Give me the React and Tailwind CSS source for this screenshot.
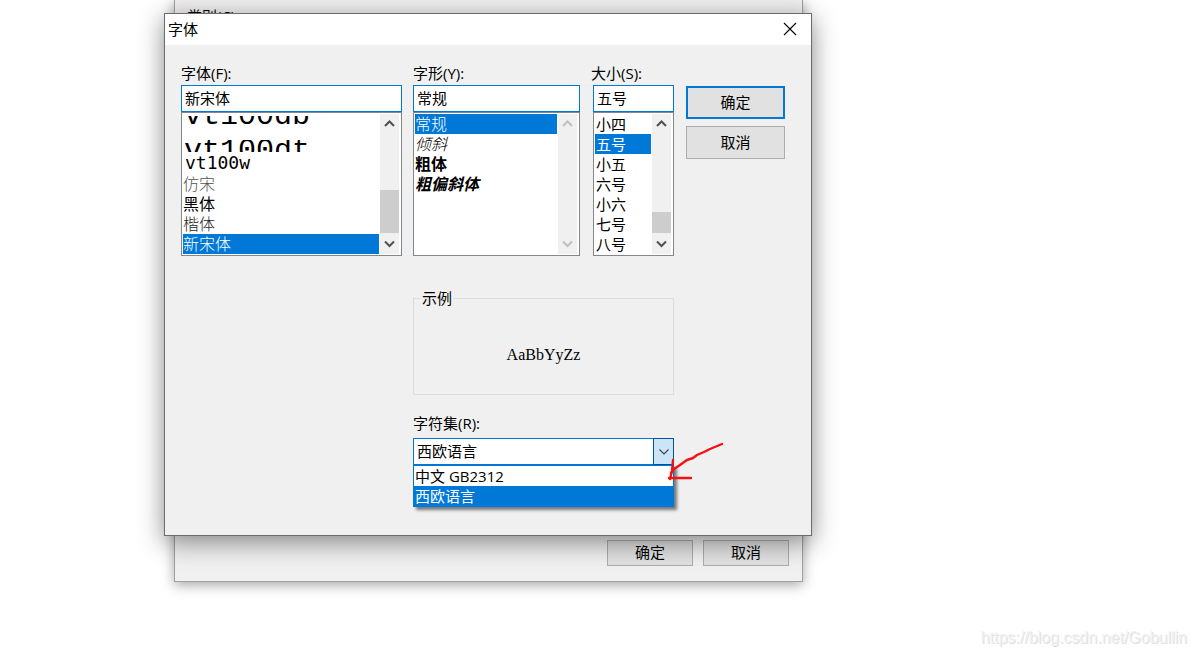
import { useState } from 'react';
import clsx from 'clsx';

const FONTS = [
  { id: 'vt100db', label: 'vt100db', kind: 'cutTop' },
  { id: 'vt100dt', label: 'vt100dt', kind: 'cutBottom' },
  { id: 'vt100w', label: 'vt100w', kind: 'wide' },
  { id: 'fangsong', label: '仿宋', className: 'font-light text-neutral-600' },
  { id: 'heiti', label: '黑体' },
  { id: 'kaiti', label: '楷体', className: 'font-light text-neutral-800' },
  { id: 'nsimsun', label: '新宋体', className: 'font-light' },
];

const STYLES = [
  { id: 'regular', label: '常规', className: 'font-light' },
  { id: 'italic', label: '倾斜', className: 'font-light italic' },
  { id: 'bold', label: '粗体', className: 'font-bold' },
  { id: 'boldItalic', label: '粗偏斜体', className: 'font-bold italic' },
];

const SIZES = ['小四', '五号', '小五', '六号', '小六', '七号', '八号'].map((s) => ({
  id: s,
  label: s,
}));

const CHARSETS = ['中文 GB2312', '西欧语言'];

export default function App() {
  const [font, setFont] = useState('nsimsun');
  const [style, setStyle] = useState('regular');
  const [size, setSize] = useState('五号');
  const [charset, setCharset] = useState('西欧语言');

  return (
    <div className="relative min-h-screen overflow-hidden bg-white pl-[174px] font-['Open_Sans','Noto_Sans_CJK_SC',sans-serif] text-[15px] leading-5 text-black">
      {/* Options window behind the dialog */}
      <section className="flex h-[582px] w-[629px] flex-col justify-between border border-t-0 border-[#a0a0a0] bg-[#f0f0f0] px-3 pt-1.5 pb-[15px] shadow-[0_3px_12px_rgba(0,0,0,0.35)]">
        <span>类别(C):</span>
        <div className="flex justify-end gap-2.5 pr-px">
          <Button className="h-[26px] w-[86px]">确定</Button>
          <Button className="h-[26px] w-[86px]">取消</Button>
        </div>
      </section>

      {/* Font dialog */}
      <section
        role="dialog"
        aria-label="字体"
        className="absolute top-[13px] left-[164px] w-[648px] border border-[#6b6b6b] bg-[#f0f0f0] shadow-[0_6px_24px_rgba(0,0,0,0.45)]"
      >
        <header className="flex h-[31px] items-center justify-between bg-white pr-3.5 pb-0.5 pl-[3px]">
          <h1>字体</h1>
          <button type="button" aria-label="关闭">
            <svg width="14" height="14" viewBox="0 0 14 14" stroke="#000" strokeWidth="1.1">
              <path d="M1 1 L13 13 M13 1 L1 13" />
            </svg>
          </button>
        </header>

        <div className="grid grid-cols-[221px_167px_83px_100px] gap-x-[11px] pt-[18px] pb-[70px] pl-4">
          <Picker
            id="font"
            label="字体(F):"
            items={FONTS}
            value={font}
            onChange={setFont}
            itemClass="text-base leading-5"
            thumb="mt-14 h-[43px]"
          />
          <Picker
            id="style"
            label="字形(Y):"
            items={STYLES}
            value={style}
            onChange={setStyle}
            itemClass="text-base leading-5"
          />
          <Picker
            id="size"
            label="大小(S):"
            items={SIZES}
            value={size}
            onChange={setSize}
            itemClass="pl-px"
            boxClass="ml-0.5"
            thumb="mt-[78px] h-[21px]"
          />
          <div className="flex flex-col gap-[7px] pt-[23px] pl-px">
            <Button primary className="h-[33px]">确定</Button>
            <Button className="h-[33px]">取消</Button>
          </div>

          <div className="col-span-2 col-start-2 mt-8">
            <fieldset className="h-[107px] border border-[#dcdcdc] pl-1.5">
              <legend className="px-0.5">示例</legend>
              <p className="pt-[37px] pr-1.5 text-center font-['Liberation_Serif',serif] text-base leading-5">
                AaBbYyZz
              </p>
            </fieldset>

            <label htmlFor="charset" className="mt-[18px] mb-[5px] block">
              字符集(R):
            </label>
            <div className="relative">
              <select
                id="charset"
                value={charset}
                onChange={(e) => setCharset(e.target.value)}
                className="block h-[27px] w-full appearance-none border border-[#0078d7] bg-white px-[3px] pb-0.5 outline-none"
              >
                {CHARSETS.map((c) => (
                  <option key={c}>{c}</option>
                ))}
              </select>
              <span className="pointer-events-none absolute inset-y-0 right-0 flex w-[21px] items-center justify-center border border-[#005499] bg-[#cce4f7]">
                <svg width="10" height="6" viewBox="0 0 10 6" fill="none" stroke="#404040" strokeWidth="1.1">
                  <path d="M0.5 0.5 L5 5 L9.5 0.5" />
                </svg>
              </span>
              <ul
                role="listbox"
                aria-label="字符集"
                className="absolute inset-x-0 top-full border border-[#0078d7] bg-white shadow-[3px_3px_3px_rgba(0,0,0,0.5)]"
              >
                {CHARSETS.map((c) => (
                  <li
                    key={c}
                    role="option"
                    aria-selected={c === charset}
                    onClick={() => setCharset(c)}
                    className={clsx('px-px', c === charset && 'bg-[#0078d7] text-white')}
                  >
                    {c}
                  </li>
                ))}
              </ul>
              <HandArrow />
            </div>
          </div>
        </div>
      </section>

      <a
        href="https://blog.csdn.net/Gobullin"
        className="absolute right-2 bottom-2 font-['Liberation_Sans',sans-serif] text-base leading-5 text-[#f2f2f2] [text-shadow:1px_1px_0_#e0e0e0]"
      >
        https://blog.csdn.net/Gobullin
      </a>
    </div>
  );
}

function Button({ primary, className, children }) {
  return (
    <button
      type="button"
      className={clsx(
        'bg-[#e1e1e1] pb-0.5 text-center',
        primary ? 'border-2 border-[#0078d7]' : 'border border-[#adadad]',
        className
      )}
    >
      {children}
    </button>
  );
}

function Picker({ id, label, items, value, onChange, itemClass, boxClass, thumb }) {
  const current = items.find((i) => i.id === value);
  return (
    <div className="min-w-0">
      <label htmlFor={id} className="mb-0.5 block">
        {label}
      </label>
      <div className={boxClass}>
        <input
          id={id}
          readOnly
          value={current.label}
          className="block h-[27px] w-full border border-[#0078d7] bg-white px-[3px] pb-0.5 outline-none"
        />
        <div className="flex h-[144px] border border-[#828790] bg-white py-px pr-0.5 pl-px">
          <ul role="listbox" aria-label={label} className="mr-px min-w-0 flex-1">
            {items.map((item) => (
              <li
                key={item.id}
                role="option"
                aria-selected={item.id === value}
                onClick={() => onChange(item.id)}
                className={clsx(
                  'h-5 overflow-hidden',
                  itemClass,
                  item.className,
                  item.id === value && 'bg-[#0078d7] text-white'
                )}
              >
                <ItemLabel item={item} />
              </li>
            ))}
          </ul>
          <ScrollBar thumb={thumb} />
        </div>
      </div>
    </div>
  );
}

// The terminal fonts are taller than a row, so only a slice of them shows
function ItemLabel({ item }) {
  if (item.kind === 'cutTop') {
    return (
      <span className="mt-0.5 flex h-[9px] items-end overflow-hidden pl-px font-['Liberation_Mono',monospace] text-[30px] leading-[18px]">
        {item.label}
      </span>
    );
  }
  if (item.kind === 'cutBottom') {
    return (
      <span className="mt-1.5 block h-3 overflow-hidden pl-px font-['Liberation_Mono',monospace] text-[30px] leading-[22px]">
        {item.label}
      </span>
    );
  }
  if (item.kind === 'wide') {
    return (
      <span className="block pl-0.5 font-['DejaVu_Sans_Mono',monospace] text-lg leading-[18px]">
        {item.label}
      </span>
    );
  }
  return item.label;
}

function ScrollBar({ thumb }) {
  const color = thumb ? '#505050' : '#bfbfbf';
  return (
    <div className="flex w-[19px] flex-col bg-[#f0f0f0]">
      <Chevron d="M1 6 L5.5 1.5 L10 6" color={color} />
      <div className="flex-1">
        {thumb && <div className={clsx('bg-[#cdcdcd]', thumb)} />}
      </div>
      <Chevron d="M1 1.5 L5.5 6 L10 1.5" color={color} />
    </div>
  );
}

function Chevron({ d, color }) {
  return (
    <span className="flex h-5 items-center justify-center">
      <svg width="11" height="8" viewBox="0 0 11 8" fill="none" stroke={color} strokeWidth="2">
        <path d={d} />
      </svg>
    </span>
  );
}

function HandArrow() {
  return (
    <svg
      className="pointer-events-none absolute top-0 left-[250px]"
      width="64"
      height="48"
      viewBox="0 0 64 48"
      fill="none"
      stroke="#f81010"
      strokeWidth="2.4"
      strokeLinecap="round"
      strokeLinejoin="round"
    >
      <path d="M59 6 L47 11 L41 14 L34 17 L30 20 L24 22 L17 27 L11 31 L8 35" />
      <path d="M10 22 L9 33 L7 41 M6 40 L28 40" />
    </svg>
  );
}
